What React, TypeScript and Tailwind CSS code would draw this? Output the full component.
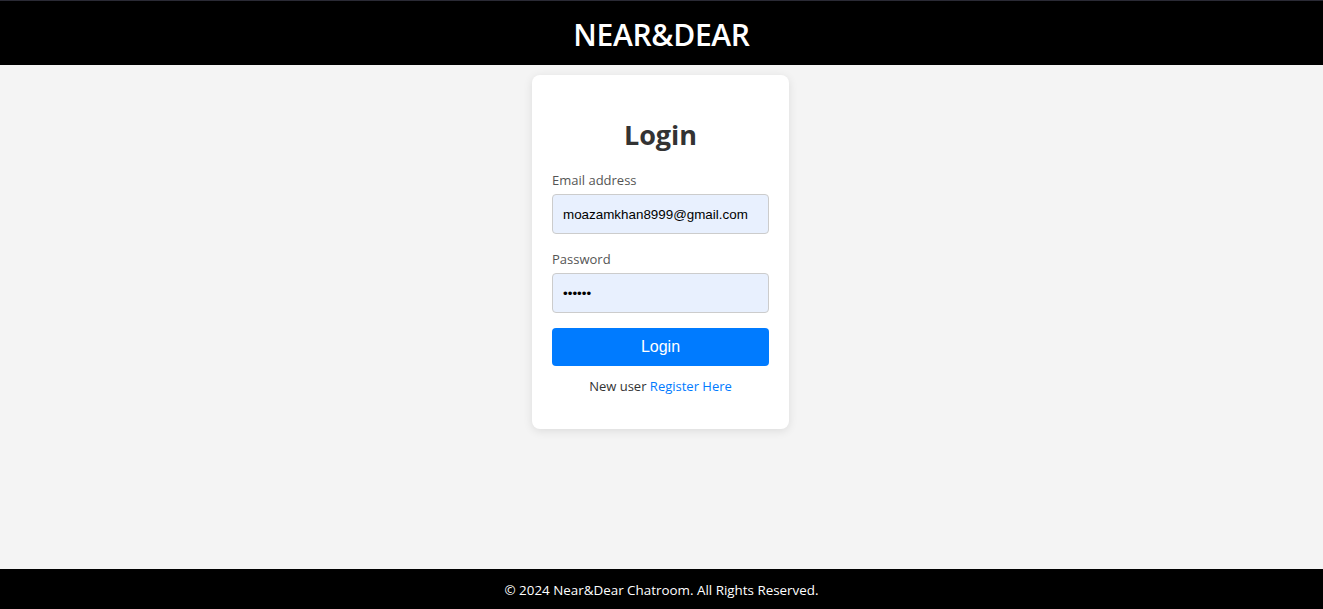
import { useState } from 'react';

export default function App() {
  const [email, setEmail] = useState('moazamkhan8999@gmail.com');
  const [password, setPassword] = useState('123456');

  return (
    <div
      className="min-h-screen flex flex-col bg-[#f4f4f4]"
      style={{ fontFamily: '"Open Sans", "Noto Sans", sans-serif' }}
    >
      {/* Header */}
      <header className="h-[65px] bg-black border-t border-[#2a2a35] flex items-center justify-center">
        <h1 className="text-[30px] font-semibold text-white tracking-[-0.3px] pt-[2px]">NEAR&amp;DEAR</h1>
      </header>

      {/* Main */}
      <main className="flex-1 flex justify-center pt-[10px] pr-[2px]">
        <div className="w-[257px] h-[354px] bg-white rounded-lg shadow-[0_2px_10px_rgba(0,0,0,0.1)] px-5 pt-[38px]">
          <h2 className="text-[27px] font-bold text-[#333] text-center leading-[44px] mb-[14px]">Login</h2>

          <div className="mb-[16px]">
            <label className="block text-[13px] text-[#555] leading-[18px] mb-[5px]">Email address</label>
            <input
              type="email"
              value={email}
              onChange={(e) => setEmail(e.target.value)}
              className="w-full h-10 px-[10px] text-[13.4px] text-black bg-[#e8f0fe] border border-[#ccc] rounded outline-none"
              style={{ fontFamily: '"Liberation Sans", Arial, sans-serif' }}
            />
          </div>

          <div className="mb-[15px]">
            <label className="block text-[13px] text-[#555] leading-[18px] mb-[5px]">Password</label>
            <input
              type="password"
              value={password}
              onChange={(e) => setPassword(e.target.value)}
              className="w-full h-10 px-[10px] text-[13.4px] text-black bg-[#e8f0fe] border border-[#ccc] rounded outline-none"
              style={{ fontFamily: '"Liberation Sans", Arial, sans-serif' }}
            />
          </div>

          <button
            className="w-full h-[38px] bg-[#007bff] text-white text-[16px] rounded"
            style={{ fontFamily: '"Liberation Sans", Arial, sans-serif' }}
          >
            Login
          </button>

          <p className="text-center text-[13px] text-[#333] mt-[11px]">
            New user <a href="#" className="text-[#007bff]">Register Here</a>
          </p>
        </div>
      </main>

      {/* Footer */}
      <footer className="h-10 bg-black flex items-center justify-center pt-[3px]">
        <p className="text-white text-[13.4px]">© 2024 Near&amp;Dear Chatroom. All Rights Reserved.</p>
      </footer>
    </div>
  );
}
